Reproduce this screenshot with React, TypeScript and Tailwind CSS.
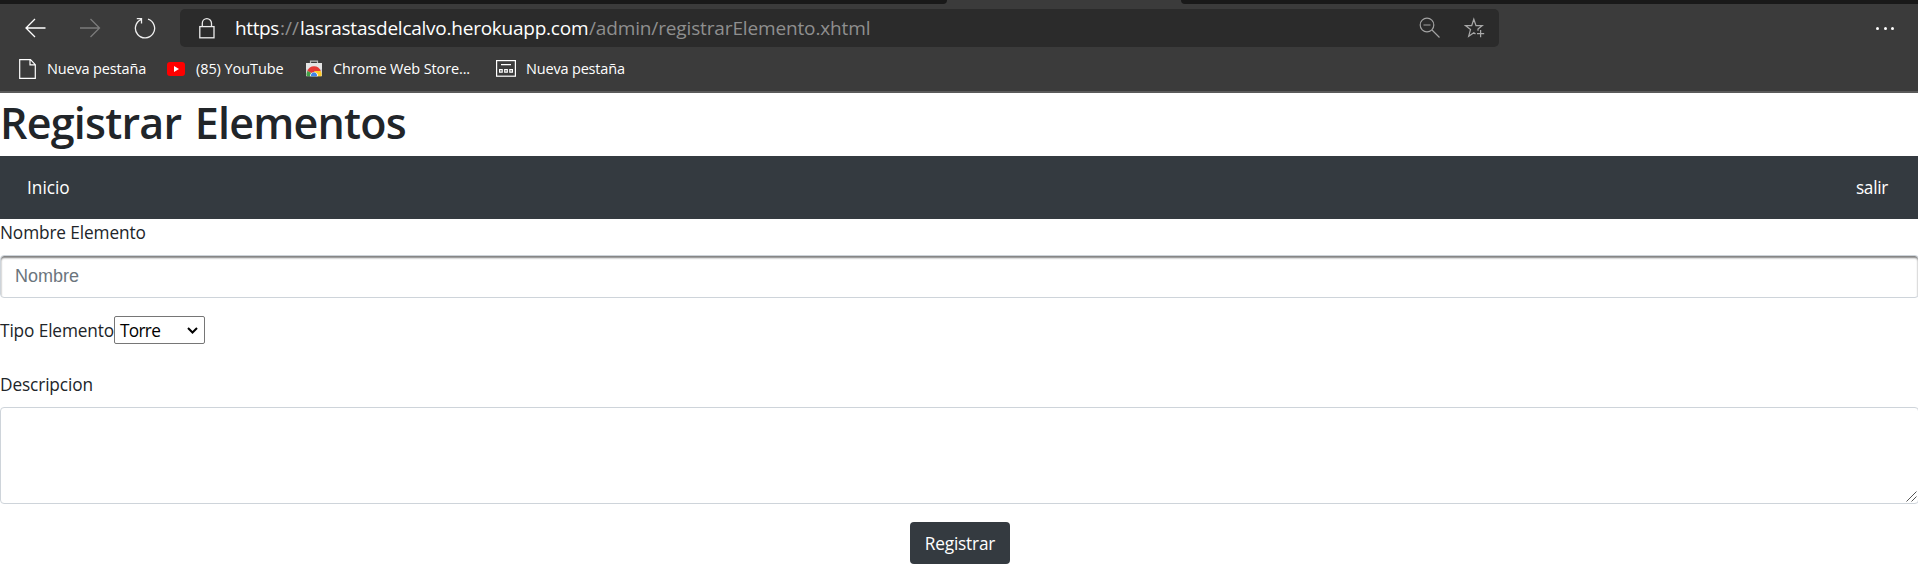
import React from 'react';

const icon = { fill: 'none', stroke: 'currentColor' } as const;

function BackIcon() {
  return (
    <svg className="h-5 w-[21px] text-white" viewBox="0 0 21 20" {...icon} strokeWidth="1.3">
      <path d="M10 1L1 10l9 9M1 10h19.5" />
    </svg>
  );
}

function ForwardIcon() {
  return (
    <svg className="h-5 w-[21px] text-[#7b7b7b]" viewBox="0 0 21 20" {...icon} strokeWidth="1.3">
      <path d="M10.5 1l9 9-9 9M19.5 10H0" />
    </svg>
  );
}

function ReloadIcon() {
  return (
    <svg className="h-[22px] w-[22px] text-[#f0f0f0]" viewBox="0 0 22 22" {...icon} strokeWidth="1.3">
      <path d="M14 2.2A9.6 9.6 0 1 1 7 2.6M2.8 1.7H7.5V6.5" />
    </svg>
  );
}

function LockIcon() {
  return (
    <svg className="h-[21px] w-4 text-[#ececec]" viewBox="0 0 16 21" {...icon} strokeWidth="1.3">
      <rect x="0.8" y="8.6" width="14.2" height="11.2" />
      <path d="M3.3 8.6V5.3a4.6 4.6 0 0 1 9.2 0v3.3" />
    </svg>
  );
}

function ZoomOutIcon() {
  return (
    <svg className="h-[22px] w-[22px] text-[#a2a2a2]" viewBox="0 0 22 22" {...icon} strokeWidth="1.2">
      <circle cx="8" cy="8" r="6.8" />
      <path d="M4.5 8h7M13 13l7.5 7.5" />
    </svg>
  );
}

function StarAddIcon() {
  return (
    <svg className="h-[22px] w-[22px] text-[#a8a8a8]" viewBox="0 0 22 22" {...icon} strokeWidth="1.25">
      <path d="M11.5 17L9.8 15.7 4.7 19.2 6.5 12.6 1.4 8.6H7.7L9.8 2.2 12 8.6h6.2L14 12v1.8M13 16.5h7.2M16.6 13v7.2" />
    </svg>
  );
}

function PageIcon() {
  return (
    <svg className="h-5 w-[17px] text-white" viewBox="0 0 17 20" {...icon} strokeWidth="1.2">
      <path d="M.7.7h10.8l4.8 5v13.6H.7zM11 .7v5.2h5.3" />
    </svg>
  );
}

function YouTubeIcon() {
  return (
    <svg className="h-[14px] w-[18px]" viewBox="0 0 18 14">
      <rect width="18" height="14" rx="3" fill="#f00" />
      <path d="M7 4.1v5.8L12 7z" fill="#fff" />
    </svg>
  );
}

function WebStoreIcon() {
  return (
    <svg className="h-[17px] w-[18px]" viewBox="0 0 18 17">
      <path d="M5.5 3V1.2h7V3" fill="none" stroke="#bdbdbd" strokeWidth="1.2" />
      <path d="M1 3h16v6H1z" fill="#e4e4e4" />
      <path d="M1 9h16v7.2H1z" fill="#d3d3d3" />
      <path d="M2.3 11A7.2 7.2 0 0 1 15.8 11L9 14z" fill="#e53935" />
      <path d="M2.3 11a7.5 7.5 0 0 0-.5 5.2H9L5.5 12.5z" fill="#43a047" />
      <path d="M15.8 11H9l2 5.2h5.3a7.5 7.5 0 0 0-.5-5.2z" fill="#ffca28" />
      <path d="M5 16.2a4 4 0 0 1 8 0z" fill="#fff" />
      <path d="M5.9 16.2a3.1 3.6 0 0 1 6.2 0z" fill="#3f83e8" />
    </svg>
  );
}

function TabPageIcon() {
  return (
    <svg className="h-[17px] w-5 text-white" viewBox="0 0 20 17" {...icon} strokeWidth="1.2">
      <rect x=".6" y=".6" width="18.8" height="15.6" />
      <path d="M5 4.7h10M3.6 9.6h2.6v2.6H3.6zM8.7 9.6h2.6v2.6H8.7zM13.8 9.6h2.6v2.6h-2.6z" />
    </svg>
  );
}

function BrowserChrome() {
  return (
    <header className="h-[93px] border-b-2 border-[#5a5a5a] bg-[#3b3b3b]">
      <div className="flex h-1 justify-between">
        <div className="w-[947px] rounded-br-[4px] bg-[#191919]" />
        <div className="w-[737px] rounded-bl-[4px] bg-[#191919]" />
      </div>
      <div className="flex h-12 items-center pr-[24px]">
        <div className="flex w-[180px] shrink-0 items-center pl-[25px]">
          <BackIcon />
          <div className="w-[34px]" />
          <ForwardIcon />
          <div className="w-[33px]" />
          <ReloadIcon />
        </div>
        <div className="flex h-[38px] w-[1319px] shrink-0 items-center rounded-[5px] bg-[#2b2b2b] pr-[13px] pl-[19px]">
          <LockIcon />
          <div className="ml-5 flex flex-1 whitespace-pre text-[19px] leading-[38px] text-white">
            <span className="w-[45px] tracking-[-0.38px]">https</span>
            <span className="w-[20px] text-[#8f8f8f]">://</span>
            <span className="w-[289px] tracking-[-0.24px]">lasrastasdelcalvo.herokuapp.com</span>
            <span className="tracking-[-0.14px] text-[#8f8f8f]">/admin/registrarElemento.xhtml</span>
          </div>
          <ZoomOutIcon />
          <div className="w-[23px]" />
          <StarAddIcon />
        </div>
        <div className="ml-auto flex gap-[4.5px]">
          <i className="size-[3px] rounded-full bg-white" />
          <i className="size-[3px] rounded-full bg-white" />
          <i className="size-[3px] rounded-full bg-white" />
        </div>
      </div>
      <div className="flex h-[33px] items-center pl-[19px] text-[14.5px] leading-[20px] whitespace-nowrap text-white">
        <div className="flex w-[148px] items-center gap-[11px] tracking-[-0.15px]">
          <PageIcon />
          Nueva pestaña
        </div>
        <div className="flex w-[138px] items-center gap-[11px] tracking-[-0.08px]">
          <YouTubeIcon />
          (85) YouTube
        </div>
        <div className="flex w-[191px] items-center gap-[10px] tracking-[-0.13px]">
          <WebStoreIcon />
          Chrome Web Store...
        </div>
        <div className="flex items-center gap-[10px] tracking-[-0.18px]">
          <TabPageIcon />
          Nueva pestaña
        </div>
      </div>
    </header>
  );
}

export default function App() {
  return (
    <div className="h-[564px] w-full overflow-hidden bg-white font-['Open_Sans',sans-serif] text-[17.25px] leading-[27px] text-[#212529]">
      <BrowserChrome />
      <main className="w-[1919px]">
        <h1 className="mb-[3px] h-[60px] text-[43px] leading-[60px] font-semibold tracking-[-0.75px] [word-spacing:3px]">
          Registrar Elementos
        </h1>
        <nav className="flex h-[63px] items-center justify-between bg-[#343a40] pr-[31px] pl-[27px] text-white">
          <a>Inicio</a>
          <a className="tracking-[-0.3px]">salir</a>
        </nav>
        <form>
          <label className="mb-[9px] block tracking-[-0.12px]">Nombre Elemento</label>
          <input
            type="text"
            placeholder="Nombre"
            className="block h-[43px] w-full rounded-[4px] border border-[#ced4da] px-[14px] font-['Liberation_Sans',sans-serif] text-[18px] shadow-[inset_0_2px_2px_rgba(0,0,0,0.5)] placeholder:text-[#6c757d]"
          />
          <div className="mt-[18px] flex h-7 items-center">
            <label className="w-[114px] whitespace-nowrap tracking-[-0.12px]">Tipo Elemento</label>
            <div className="flex h-7 w-[91px] items-center justify-between rounded-[2px] border border-[#767676] pr-[6px] pl-[5px] tracking-[-0.7px] text-black">
              Torre
              <svg className="h-[7px] w-[11px]" viewBox="0 0 11 7" fill="none" stroke="#000" strokeWidth="2">
                <path d="M1 1l4.5 4.5L10 1" />
              </svg>
            </div>
          </div>
          <label className="mt-[27px] mb-[9px] block tracking-[-0.12px]">Descripcion</label>
          <div className="relative">
            <textarea className="block h-[97px] w-full resize-none rounded-[4px] border border-[#ced4da]" />
            <svg
              className="absolute right-[2px] bottom-[2px] h-[11px] w-[11px]"
              viewBox="0 0 11 11"
              fill="none"
              stroke="#555"
              strokeWidth="1"
            >
              <path d="M.5 10.5l10-10M5.5 10.5l5-5" />
            </svg>
          </div>
          <div className="mt-[18px] flex w-[1920px] justify-center">
            <button
              type="button"
              className="h-[42px] w-[100px] rounded-[4px] bg-[#343a40] tracking-[-0.2px] text-white"
            >
              Registrar
            </button>
          </div>
        </form>
      </main>
    </div>
  );
}
